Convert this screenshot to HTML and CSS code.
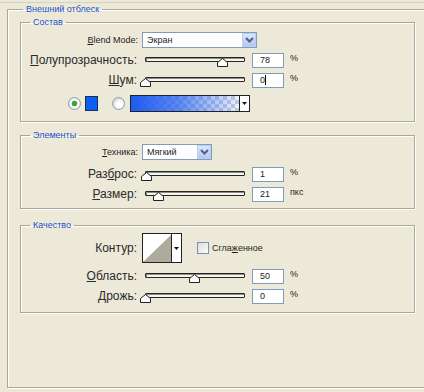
FILE: index.html
```html
<!DOCTYPE html>
<html>
<head>
    <meta charset="UTF-8">
    <meta name="viewport" content="width=device-width, initial-scale=1.0">
    <title>Внешний отблеск</title>
    <link rel="stylesheet" href="styles.css">
</head>
<body>
    <div class="topline"></div>
    <fieldset class="outer">
        <legend>Внешний отблеск</legend>

        <fieldset class="group sostav">
            <legend>Состав</legend>
            <div class="row">
                <span class="lbl small"><u>B</u>lend Mode:</span>
                <div class="select wide">
                    <span class="val">Экран</span>
                    <span class="arrow"><svg width="13" height="12"><path d="M3 4 L6.5 7.5 L10 4" fill="none" stroke="#4d6185" stroke-width="2"/></svg></span>
                </div>
            </div>
            <div class="row">
                <span class="lbl"><u>П</u>олупрозрачность:</span>
                <div class="slider">
                    <div class="track"></div>
                    <svg class="thumb" width="11" height="9" style="left:72px"><polygon points="0.5,8.5 0.5,4.5 5.5,0.5 10.5,4.5 10.5,8.5" fill="#fff" stroke="#222"/></svg>
                </div>
                <span class="field">78</span>
                <span class="unit">%</span>
            </div>
            <div class="row">
                <span class="lbl"><u>Ш</u>ум:</span>
                <div class="slider">
                    <div class="track"></div>
                    <svg class="thumb" width="11" height="9" style="left:-5px"><polygon points="0.5,8.5 0.5,4.5 5.5,0.5 10.5,4.5 10.5,8.5" fill="#fff" stroke="#222"/></svg>
                </div>
                <span class="field">0<i class="caret"></i></span>
                <span class="unit">%</span>
            </div>
            <div class="colorrow">
                <span class="radio checked"></span>
                <span class="swatch"></span>
                <span class="radio second"></span>
                <div class="gradient">
                    <span class="gfill"></span>
                    <span class="drop"><svg width="5" height="3"><polygon points="0,0 5,0 2.5,3" fill="#111"/></svg></span>
                </div>
            </div>
        </fieldset>

        <fieldset class="group elem">
            <legend>Элементы</legend>
            <div class="row">
                <span class="lbl small"><u>Т</u>ехника:</span>
                <div class="select narrow">
                    <span class="val">Мягкий</span>
                    <span class="arrow"><svg width="13" height="12"><path d="M3 4 L6.5 7.5 L10 4" fill="none" stroke="#4d6185" stroke-width="2"/></svg></span>
                </div>
            </div>
            <div class="row gap">
                <span class="lbl">Раз<u>б</u>рос:</span>
                <div class="slider">
                    <div class="track"></div>
                    <svg class="thumb" width="11" height="9" style="left:-4px"><polygon points="0.5,8.5 0.5,4.5 5.5,0.5 10.5,4.5 10.5,8.5" fill="#fff" stroke="#222"/></svg>
                </div>
                <span class="field">1</span>
                <span class="unit">%</span>
            </div>
            <div class="row">
                <span class="lbl"><u>Р</u>азмер:</span>
                <div class="slider">
                    <div class="track"></div>
                    <svg class="thumb" width="11" height="9" style="left:8px"><polygon points="0.5,8.5 0.5,4.5 5.5,0.5 10.5,4.5 10.5,8.5" fill="#fff" stroke="#222"/></svg>
                </div>
                <span class="field">21</span>
                <span class="unit">пкс</span>
            </div>
        </fieldset>

        <fieldset class="group qual">
            <legend>Качество</legend>
            <div class="row tall">
                <span class="lbl">Контур:</span>
                <div class="contour">
                    <svg class="curve" width="29" height="28"><polygon points="0,28 29,0 29,28" fill="#aeab9c"/></svg>
                    <span class="drop"><svg width="5" height="3"><polygon points="0,0 5,0 2.5,3" fill="#111"/></svg></span>
                </div>
                <span class="check"></span>
                <span class="checklbl">Сгла<u>ж</u>енное</span>
            </div>
            <div class="row gap">
                <span class="lbl"><u>О</u>бласть:</span>
                <div class="slider">
                    <div class="track"></div>
                    <svg class="thumb" width="11" height="9" style="left:44px"><polygon points="0.5,8.5 0.5,4.5 5.5,0.5 10.5,4.5 10.5,8.5" fill="#fff" stroke="#222"/></svg>
                </div>
                <span class="field">50</span>
                <span class="unit">%</span>
            </div>
            <div class="row">
                <span class="lbl"><u>Д</u>рожь:</span>
                <div class="slider">
                    <div class="track"></div>
                    <svg class="thumb" width="11" height="9" style="left:-5px"><polygon points="0.5,8.5 0.5,4.5 5.5,0.5 10.5,4.5 10.5,8.5" fill="#fff" stroke="#222"/></svg>
                </div>
                <span class="field">0</span>
                <span class="unit">%</span>
            </div>
        </fieldset>
    </fieldset>
</body>
</html>
```

FILE: styles.css
```css
body {
    margin: 0;
    height: 392px;
    overflow: hidden;
    background-color: #ece9d8;
    font-family: "Liberation Sans", Arial, sans-serif;
    color: #1e1e1e;
}

.topline {
    margin-top: 2px;
    border-top: 1px solid #d6d3c3;
}

fieldset {
    margin: 0;
    padding: 0;
    min-width: 0;
    box-sizing: border-box;
    border: 1px solid #a9a796;
    box-shadow: inset 1px 1px 0 #fff, 1px 1px 0 #fff;
}

legend {
    padding: 0 3px;
    font-size: 9px;
    line-height: 12px;
    color: #2150c6;
}

.outer {
    margin-left: 7px;
    width: 417px;
    height: 385px;
    padding: 1px 0 0 12px;
    border-right: none;
}

.outer > legend {
    margin-left: 3px;
}

.group {
    width: 395px;
}

.group > legend {
    margin-left: 9px;
}

.sostav {
    height: 106px;
    padding-top: 2px;
}

.elem {
    height: 80px;
    margin-top: 7px;
    padding-top: 1px;
}

.qual {
    height: 94px;
    margin-top: 10px;
    padding-top: 1px;
}

.row {
    display: flex;
    align-items: center;
    height: 20px;
}

.row.gap {
    margin-top: 2px;
}

.row.tall {
    height: 32px;
}

.lbl {
    flex: none;
    width: 116px;
    text-align: right;
    font-size: 12px;
    color: #2a2a2a;
}

.lbl.small {
    width: 117px;
    font-size: 9px;
    color: #1e1e1e;
}

/* combo box */
.select {
    display: flex;
    align-items: center;
    height: 16px;
    margin-left: 4px;
    box-sizing: border-box;
    border: 1px solid #7f9db9;
    background-color: #fff;
    font-size: 9px;
}

.select.wide {
    width: 115px;
}

.select.narrow {
    width: 70px;
}

.select .val {
    flex: 1;
    padding-left: 4px;
}

.select .arrow {
    display: flex;
    align-items: center;
    justify-content: center;
    width: 14px;
    height: 14px;
    box-sizing: border-box;
    border: 1px solid #bccdf4;
    background: linear-gradient(#dbe5fc, #b4c7f3);
}

/* slider */
.slider {
    position: relative;
    flex: none;
    width: 100px;
    height: 20px;
    margin-left: 8px;
}

.track {
    margin-top: 7px;
    height: 5px;
    box-sizing: border-box;
    border: 1px solid #262626;
    border-radius: 1px;
    background-color: #f6f5f0;
    box-shadow: inset 1px 1px 0 #8d8c84;
}

.thumb {
    position: absolute;
    top: 8px;
}

.field {
    display: flex;
    align-items: center;
    width: 32px;
    height: 15px;
    margin-left: 7px;
    padding-left: 7px;
    box-sizing: border-box;
    border: 1px solid #7f9db9;
    background-color: #fff;
    font-size: 9px;
}

.caret {
    width: 1px;
    height: 10px;
    background-color: #000;
}

.unit {
    margin-left: 6px;
    margin-bottom: 5px;
    font-size: 9px;
}

/* colour row */
.colorrow {
    display: flex;
    align-items: center;
    height: 19px;
    margin-top: 4px;
    padding-left: 47px;
}

.radio {
    width: 13px;
    height: 13px;
    box-sizing: border-box;
    border: 1px solid #8a9db6;
    border-radius: 50%;
    background: radial-gradient(circle at 60% 60%, #fff 0 3px, #dedcd2 6px);
}

.radio.checked {
    background: radial-gradient(circle, #3aa53a 0 2.5px, #fff 3.2px 4px, #dcdbd2 6px);
}

.radio.second {
    margin-left: 14px;
}

.swatch {
    width: 13px;
    height: 15px;
    margin-left: 4px;
    box-sizing: border-box;
    border: 1px solid #1c2c55;
    background-color: #0b60f2;
}

.gradient {
    display: flex;
    width: 120px;
    height: 17px;
    margin-left: 5px;
    box-sizing: border-box;
    border: 1px solid #222;
}

.gfill {
    flex: 1;
    background:
        linear-gradient(to right, #1d5cf0, rgba(40, 100, 240, 0.75) 45%, rgba(60, 120, 240, 0.1) 100%),
        conic-gradient(#cfd2da 25%, #fff 0 50%, #cfd2da 0 75%, #fff 0) 0 0 / 8px 8px;
}

.drop {
    display: flex;
    align-items: center;
    justify-content: center;
    width: 9px;
    border-left: 1px solid #222;
    background-color: #fff;
}

/* contour */
.contour {
    display: flex;
    width: 40px;
    height: 30px;
    margin-left: 5px;
    box-sizing: border-box;
    border: 1px solid #222;
    background-color: #fff;
}

.curve {
    display: block;
}

.check {
    width: 12px;
    height: 12px;
    margin-left: 15px;
    box-sizing: border-box;
    border: 1px solid #7a93b5;
    background: linear-gradient(135deg, #dcdbd3, #fff);
}

.checklbl {
    margin-left: 3px;
    font-size: 9px;
}
```
